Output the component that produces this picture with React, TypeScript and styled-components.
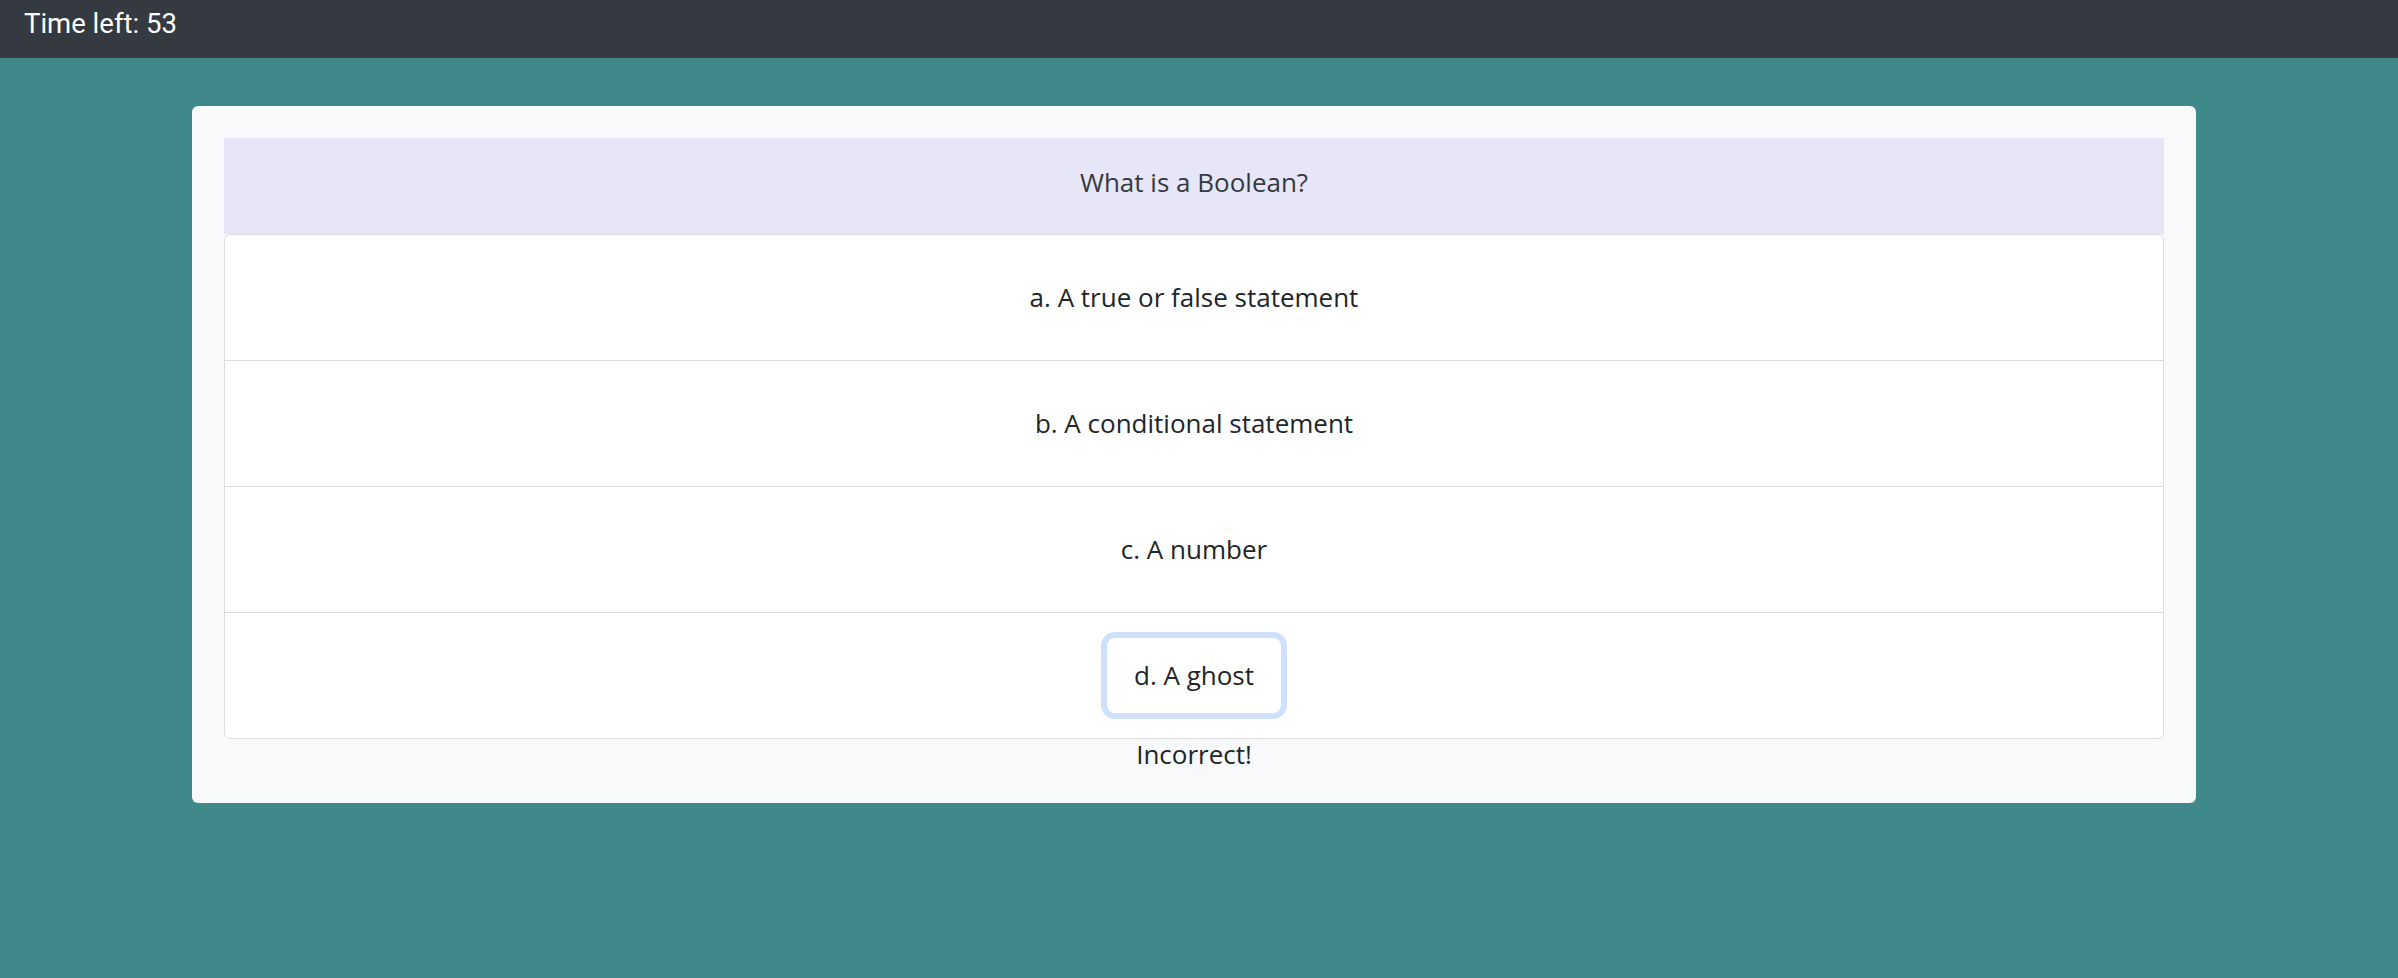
import React from "react";
import styled, { createGlobalStyle } from "styled-components";

const GlobalStyle = createGlobalStyle`
  html, body {
    margin: 0;
    padding: 0;
    background: #3f898a;
  }
  body {
    font-family: "Open Sans", "Noto Sans", sans-serif;
    color: #212529;
    min-height: 978px;
  }
`;

const Navbar = styled.header`
  height: 58px;
  background: #343a40;
  display: flex;
  align-items: flex-start;
  padding: 7px 24px 0;
  box-sizing: border-box;
`;

const Brand = styled.span`
  color: #ffffff;
  font-family: "Roboto", "Open Sans", sans-serif;
  font-size: 27.5px;
  line-height: 1.2;
`;

const Main = styled.main`
  padding: 48px 0 0 192px;
`;

const Card = styled.section`
  width: 2004px;
  box-sizing: border-box;
  background: #f8f9fa;
  border-radius: 6px;
  padding: 32px 32px 34px;
  display: flex;
  flex-direction: column;
`;

const QuestionHeader = styled.div`
  height: 96px;
  background: #e6e6f8;
  display: flex;
  align-items: center;
  justify-content: center;
  padding-bottom: 7px;
  box-sizing: border-box;
  font-size: 26px;
  line-height: 1.2;
  color: #343a40;
`;

const AnswerList = styled.ul`
  list-style: none;
  margin: 0;
  padding: 0;
  border: 1px solid #dddddd;
  border-radius: 6px;
  background: #ffffff;
  overflow: hidden;
`;

const AnswerItem = styled.li`
  height: 125px;
  display: flex;
  align-items: center;
  justify-content: center;
  & + & {
    border-top: 1px solid #dddddd;
  }
`;

const AnswerButton = styled.button<{ $focused?: boolean }>`
  font-family: "Open Sans", "Noto Sans", sans-serif;
  font-size: 26px;
  line-height: 36px;
  color: #212529;
  background: transparent;
  border: none;
  border-radius: 8px;
  padding: 19px 27px 20px;
  cursor: pointer;
  outline: none;
  box-shadow: ${(p) => (p.$focused ? "0 0 0 6px #cfe0fc" : "none")};
`;

const Feedback = styled.p`
  margin: 0;
  text-align: center;
  font-size: 26px;
  line-height: 30px;
  color: #212529;
`;

const answers = [
  "a. A true or false statement",
  "b. A conditional statement",
  "c. A number",
  "d. A ghost",
];

export default function App() {
  return (
    <>
      <GlobalStyle />
      <Navbar>
        <Brand>Time left: 53</Brand>
      </Navbar>
      <Main>
        <Card>
          <QuestionHeader>What is a Boolean?</QuestionHeader>
          <AnswerList>
            {answers.map((a, i) => (
              <AnswerItem key={a}>
                <AnswerButton $focused={i === 3}>{a}</AnswerButton>
              </AnswerItem>
            ))}
          </AnswerList>
          <Feedback>Incorrect!</Feedback>
        </Card>
      </Main>
    </>
  );
}
